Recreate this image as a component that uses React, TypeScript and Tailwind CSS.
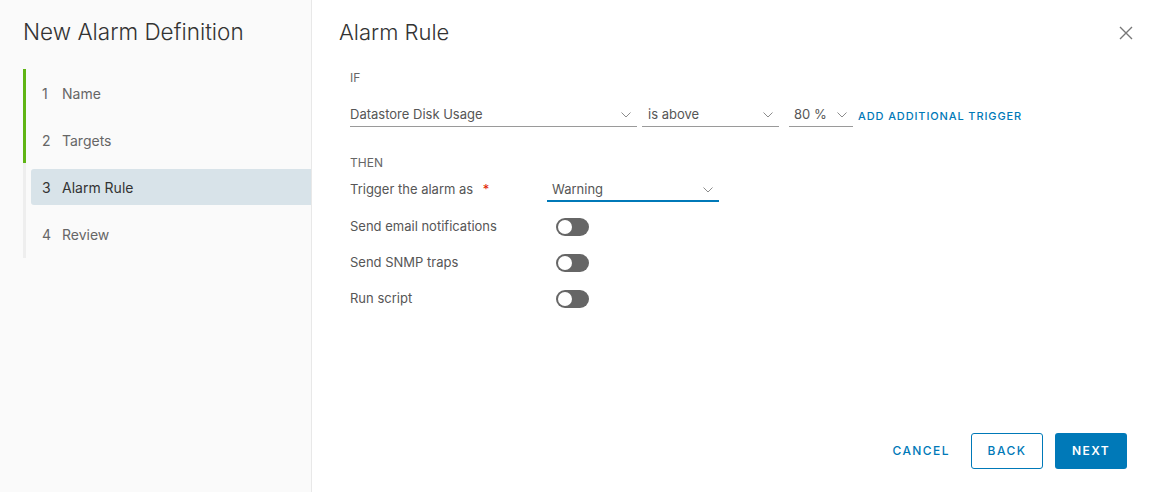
import React from "react";

const Chevron = () => (
  <svg width="10" height="6" viewBox="0 0 10 6" className="shrink-0">
    <path d="M0.5 0.5 L5 5 L9.5 0.5" fill="none" stroke="#8c8c8c" strokeWidth="1" />
  </svg>
);

const Select = ({ label, w, active }: { label: string; w: string; active?: boolean }) => (
  <div
    className={`flex items-center justify-between pr-[6px] ${w} ${
      active ? "h-[21px] border-b-2 border-[#0079b8]" : "h-[24px] border-b border-[#9a9a9a]"
    }`}
  >
    <span className="text-[13px] text-[#565656]">{label}</span>
    <Chevron />
  </div>
);

const Toggle = () => (
  <div className="w-[33px] h-[18px] rounded-full bg-[#666666] flex items-center pl-[2px]">
    <div className="w-[14px] h-[14px] rounded-full bg-white" />
  </div>
);

export default function App() {
  const steps = [
    { n: "1", t: "Name" },
    { n: "2", t: "Targets" },
    { n: "3", t: "Alarm Rule", active: true },
    { n: "4", t: "Review" },
  ];
  return (
    <div
      className="flex w-[1150px] h-[492px] bg-white text-[#565656]"
      style={{ fontFamily: "Inter, 'Noto Sans', sans-serif" }}
    >
      <div className="w-[312px] shrink-0 bg-[#fafafa] border-r border-[#e8e8e8] pt-[18px]">
        <div className="pl-[23px] text-[22.5px] font-light text-[#333] leading-[28px]">New Alarm Definition</div>
        <div className="mt-[23px] ml-[23px] flex">
          <div className="w-[3px] flex flex-col">
            <div className="h-[94px] bg-[#60b515]" />
            <div className="h-[95px] bg-[#eeeeee]" />
          </div>
          <div className="flex-1 flex flex-col pt-[6px] pl-[5px]">
            {steps.map((s) => (
              <div
                key={s.n}
                className={`h-[36px] mb-[11px] flex items-center pl-[11px] text-[14px] rounded-l-[3px] ${
                  s.active ? "bg-[#d8e3e9] text-[#333]" : "text-[#666]"
                }`}
              >
                <span className="w-[20px]">{s.n}</span>
                <span>{s.t}</span>
              </div>
            ))}
          </div>
        </div>
      </div>
      <div className="flex-1 flex flex-col pl-[27px] pr-[16px] pt-[18px] pb-[23px]">
        <div className="flex items-center justify-between">
          <div className="text-[22px] font-light text-[#333] leading-[28px]">Alarm Rule</div>
          <svg width="16" height="16" viewBox="0 0 16 16" className="mt-[2px]">
            <path d="M2 2 L14 14 M14 2 L2 14" stroke="#777" strokeWidth="1.4" />
          </svg>
        </div>
        <div className="pl-[11px] pr-[3px]">
          <div className="mt-[25px] text-[12px] text-[#666] leading-[14px]">IF</div>
          <div className="mt-[18px] flex items-end">
            <Select label="Datastore Disk Usage" w="w-[287px]" />
            <Select label="is above" w="w-[137px] ml-[5px] pl-[6px]" />
            <Select label="80 %" w="w-[64px] ml-[10px] pl-[5px]" />
            <div className="self-center text-[11px] font-medium text-[#0079b8] tracking-[0.08em] ml-[5px] mt-[3px]">
              ADD ADDITIONAL TRIGGER
            </div>
          </div>
          <div className="mt-[29px] text-[12px] text-[#666] leading-[14px]">THEN</div>
          <div className="mt-[10px] flex items-end">
            <div className="w-[197px] text-[13px] pb-[2px]">
              Trigger the alarm as <span className="text-[#e12200] ml-[6px]">*</span>
            </div>
            <Select label="Warning" w="w-[172px] pl-[5px]" active />
          </div>
          {["Send email notifications", "Send SNMP traps", "Run script"].map((l, i) => (
            <div key={l} className={`flex items-center h-[18px] ${i === 0 ? "mt-[16px]" : "mt-[18px]"}`}>
              <div className="w-[206px] text-[13px]">{l}</div>
              <Toggle />
            </div>
          ))}
        </div>
        <div className="mt-auto flex items-center justify-end pr-[3px]">
          <button className="h-[36px] text-[12px] font-medium tracking-[0.12em] text-[#0079b8] mr-[21px]">
            CANCEL
          </button>
          <button className="h-[36px] w-[72px] border border-[#0079b8] rounded-[3px] text-[12px] font-medium tracking-[0.12em] text-[#0079b8] mr-[12px]">
            BACK
          </button>
          <button className="h-[36px] w-[72px] bg-[#0079b8] rounded-[3px] text-[12px] font-semibold tracking-[0.12em] text-white mr-[4px]">
            NEXT
          </button>
        </div>
      </div>
    </div>
  );
}
